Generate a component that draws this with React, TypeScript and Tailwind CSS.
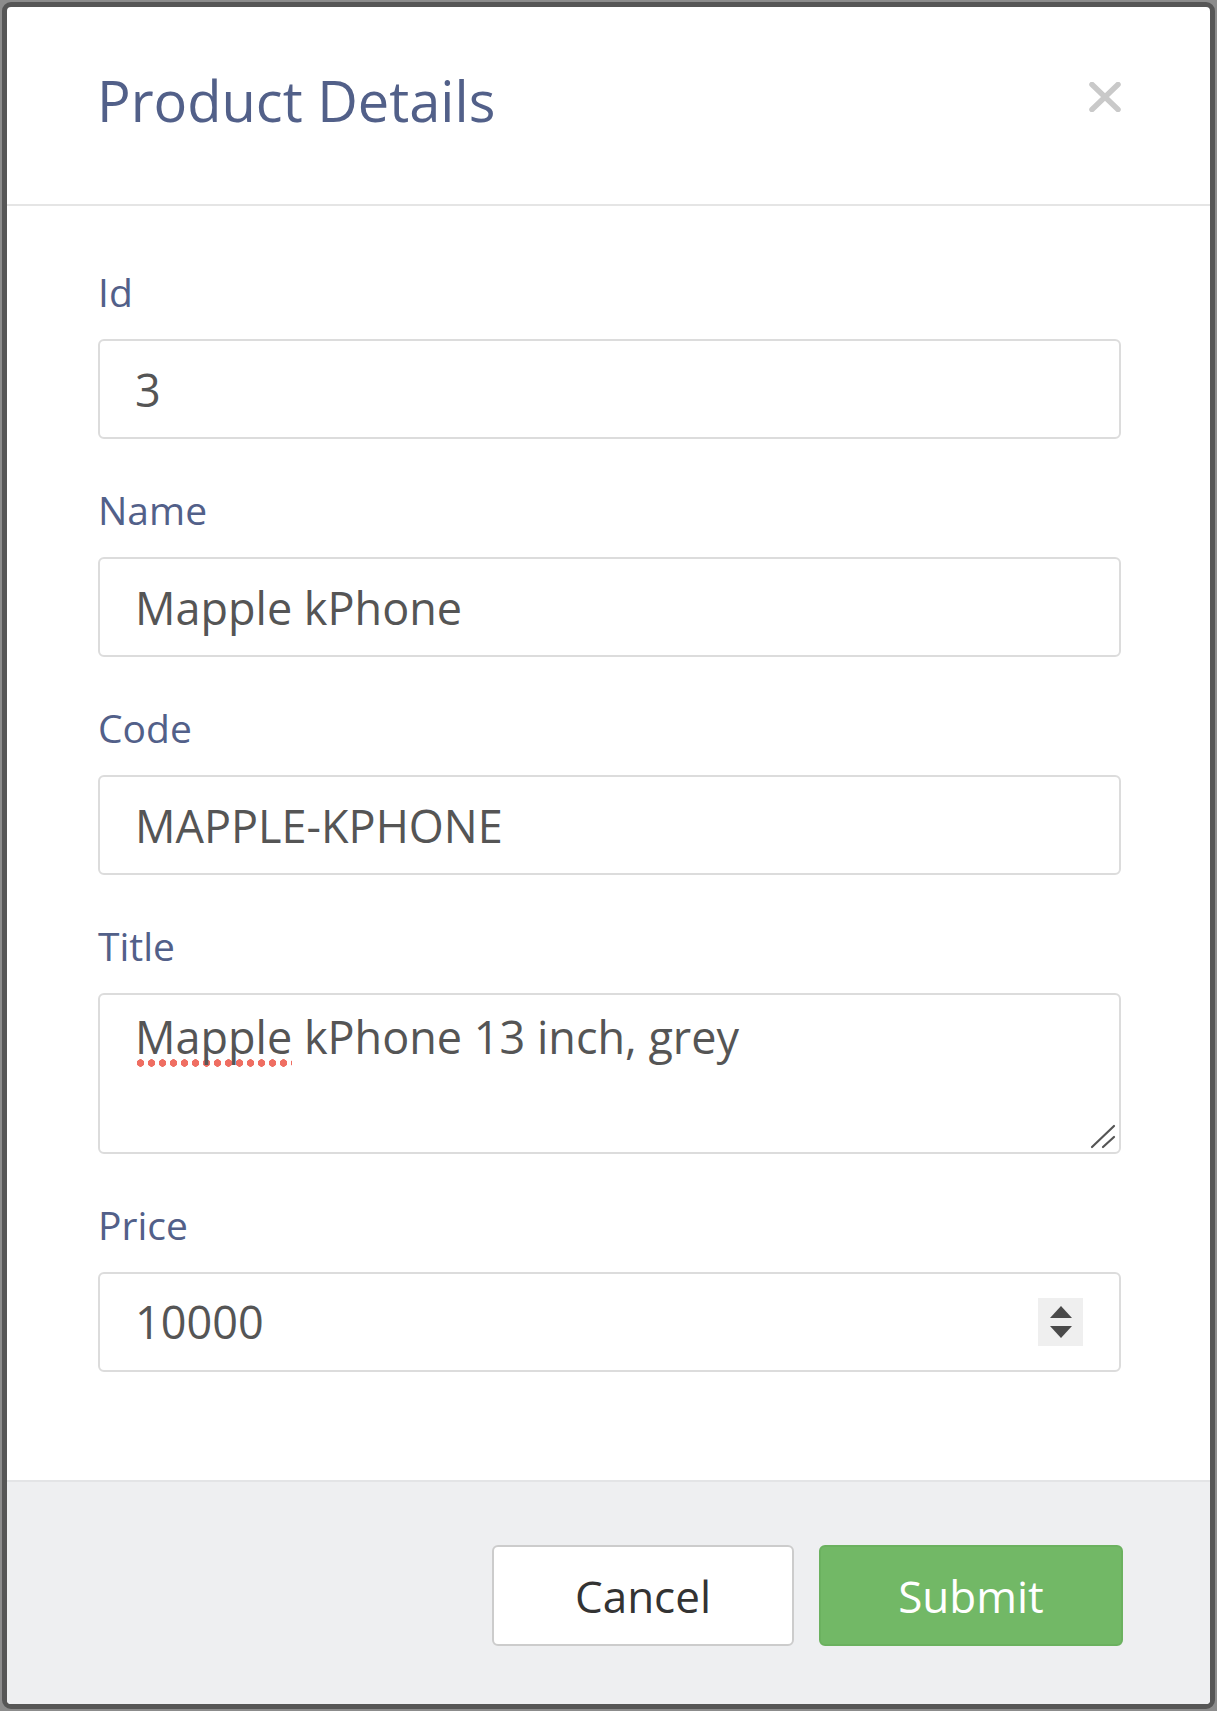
import React from "react";

const labelCls = "block text-[39px] leading-[52px] mb-[21px] text-[#526089]";
const boxCls =
  "w-full border-2 border-[#dcdcdc] rounded-[6px] bg-white text-[45px] text-[#555555]";

function Field({ label, value }: { label: string; value: string }) {
  return (
    <div>
      <label className={labelCls}>{label}</label>
      <input
        readOnly
        value={value}
        className={`${boxCls} h-[100px] px-[35px] outline-none`}
      />
    </div>
  );
}

export default function App() {
  return (
    <div className="w-[1217px] h-[1711px] bg-[#8c8c8c] p-[2px] font-['Open_Sans',sans-serif]">
      <div className="h-full flex flex-col rounded-[9px] border-[5px] border-[#565656] bg-white overflow-hidden">
        {/* header */}
        <div className="flex items-start justify-between pl-[90px] pr-[89px] pt-[63px] pb-[74px] border-b-2 border-[#e5e5e5]">
          <h4 className="text-[56px] leading-[60px] text-[#526089]">Product Details</h4>
          <button className="mt-[12px] w-[32px] h-[30px]" aria-label="Close">
            <svg width="32" height="30" viewBox="0 0 32 30">
              <path
                d="M3 2.5 L29 27.5 M29 2.5 L3 27.5"
                stroke="#c9c9c9"
                strokeWidth="5.5"
                strokeLinecap="round"
              />
            </svg>
          </button>
        </div>

        {/* body */}
        <div className="flex flex-col gap-[45px] pl-[91px] pr-[89px] pt-[60px] pb-[108px] border-b-2 border-[#e3e4e6]">
          <Field label="Id" value="3" />
          <Field label="Name" value="Mapple kPhone" />
          <Field label="Code" value="MAPPLE-KPHONE" />
          <div>
            <label className={labelCls}>Title</label>
            <div className={`${boxCls} relative h-[161px] px-[35px] pt-[10px] leading-[64px]`}>
              <span className="bg-[radial-gradient(circle,#ef6e62_3.5px,transparent_4px)] bg-[length:11px_8px] bg-repeat-x bg-[position:0_100%]">
                Mapple
              </span>{" "}
              kPhone 13 inch, grey
              <svg
                className="absolute right-[3px] bottom-[3px]"
                width="26"
                height="26"
                viewBox="0 0 26 26"
              >
                <path
                  d="M2 24 L24 3 M13 24 L24 14"
                  stroke="#555555"
                  strokeWidth="2.2"
                  strokeLinecap="round"
                />
              </svg>
            </div>
          </div>
          <div>
            <label className={labelCls}>Price</label>
            <div className={`${boxCls} h-[100px] flex items-center justify-between pl-[35px] pr-[36px]`}>
              <span>10000</span>
              <div className="w-[45px] h-[48px] bg-[#efefef] flex items-center justify-center">
                <svg width="24" height="34" viewBox="0 0 24 34">
                  <path d="M12 1 L23 13 L1 13 Z" fill="#4a4a4a" />
                  <path d="M1 21 L23 21 L12 33 Z" fill="#4a4a4a" />
                </svg>
              </div>
            </div>
          </div>
        </div>

        {/* footer */}
        <div className="flex-1 bg-[#eeeff1] flex justify-end items-start gap-[25px] pt-[63px] pr-[87px]">
          <button className="w-[302px] h-[101px] rounded-[6px] border-2 border-[#cccccc] bg-white text-[44px] text-[#333333]">
            Cancel
          </button>
          <button className="w-[304px] h-[101px] rounded-[6px] border-2 border-[#6bb15f] bg-[#72b866] text-[44px] text-white">
            Submit
          </button>
        </div>
      </div>
    </div>
  );
}
